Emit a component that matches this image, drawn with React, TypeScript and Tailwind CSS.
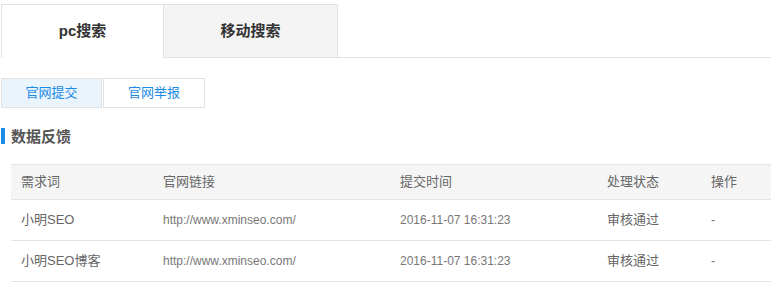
import React, { useState } from "react";

interface FeedbackRow {
  keyword: string;
  url: string;
  time: string;
  status: string;
  action: string;
}

const rows: FeedbackRow[] = [
  {
    keyword: "小明SEO",
    url: "http://www.xminseo.com/",
    time: "2016-11-07 16:31:23",
    status: "审核通过",
    action: "-",
  },
  {
    keyword: "小明SEO博客",
    url: "http://www.xminseo.com/",
    time: "2016-11-07 16:31:23",
    status: "审核通过",
    action: "-",
  },
];

const font = {
  fontFamily:
    '"Liberation Sans", Arial, "Noto Sans CJK SC", "Microsoft YaHei", sans-serif',
};

const App = () => {
  const [tab, setTab] = useState<"pc" | "mobile">("pc");
  const [sub, setSub] = useState<"submit" | "report">("submit");

  return (
    <div className="w-[782px] h-[284px] bg-white pl-px" style={font}>
      <div className="w-[770px]">
        {/* top tabs */}
        <div className="flex mt-[4px] h-[54px]">
          <button
            onClick={() => setTab("pc")}
            className={`w-[162px] h-[54px] border-[#e1e1e1] text-[15px] font-bold text-[#333] ${
              tab === "pc" ? "border-l border-t bg-white" : "border bg-[#f4f4f4]"
            }`}
          >
            pc搜索
          </button>
          <button
            onClick={() => setTab("mobile")}
            className={`w-[175px] h-[54px] border-[#e1e1e1] text-[15px] font-bold text-[#333] ${
              tab === "mobile" ? "border-x border-t bg-white" : "border bg-[#f4f4f4]"
            }`}
          >
            移动搜索
          </button>
          <div className="flex-1 border-b border-[#e1e1e1]" />
        </div>

        {/* sub buttons */}
        <div className="flex gap-px mt-[20px]">
          <button
            onClick={() => setSub("submit")}
            className={`w-[101px] h-[30px] border border-[#e1e1e1] text-[13px] text-[#1c8be6] ${
              sub === "submit" ? "bg-[#eaf4fd]" : "bg-white"
            }`}
          >
            官网提交
          </button>
          <button
            onClick={() => setSub("report")}
            className={`w-[102px] h-[30px] border border-[#e1e1e1] text-[13px] text-[#1c8be6] ${
              sub === "report" ? "bg-[#eaf4fd]" : "bg-white"
            }`}
          >
            官网举报
          </button>
        </div>

        {/* section title */}
        <div className="flex items-center mt-[19px] h-[18px]">
          <span className="w-[4px] h-[16px] bg-[#1c8be6]" />
          <span className="ml-[6px] text-[15px] font-bold text-[#555] leading-none">
            数据反馈
          </span>
        </div>

        {/* table */}
        <div className="ml-[10px] mt-[19px] border-t border-[#e5e5e5] text-[13px]">
          <div className="flex items-center h-[35px] bg-[#f5f5f5] border-b border-[#e5e5e5] text-[#666]">
            <div className="w-[152px] pl-[10px]">需求词</div>
            <div className="w-[237px]">官网链接</div>
            <div className="w-[207px]">提交时间</div>
            <div className="w-[104px]">处理状态</div>
            <div className="flex-1">操作</div>
          </div>
          {rows.map((r, i) => (
            <div
              key={i}
              className="flex items-center h-[41px] border-b border-[#e5e5e5] text-[#666]"
            >
              <div className="w-[152px] pl-[10px]">{r.keyword}</div>
              <div className="w-[237px] text-[12px] text-[#777]">{r.url}</div>
              <div className="w-[207px] text-[12px] text-[#777]">{r.time}</div>
              <div className="w-[104px]">{r.status}</div>
              <div className="flex-1 text-[#777]">{r.action}</div>
            </div>
          ))}
        </div>
      </div>
    </div>
  );
};

export default App;
